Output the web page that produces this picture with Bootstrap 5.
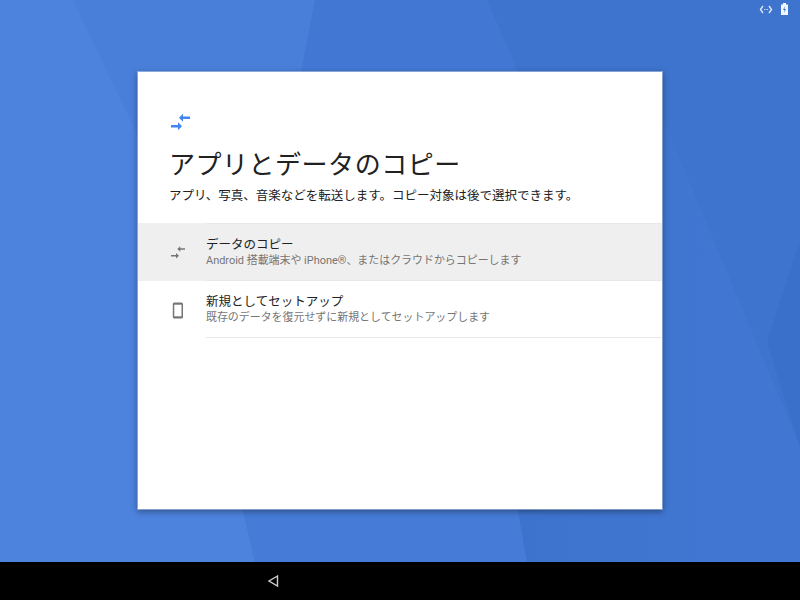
<!DOCTYPE html>
<html lang="ja"><head><meta charset="utf-8">
<link href="https://cdn.jsdelivr.net/npm/bootstrap@5.3.0/dist/css/bootstrap.min.css" rel="stylesheet">
<style>
html,body{height:100%}
body{font-family:Roboto,"Noto Sans CJK JP",sans-serif;background:#000;overflow:hidden}
.stage{height:562px;background:#3e74ce;position:relative;overflow:hidden}
.bgshape{position:absolute;inset:0;width:100%;height:100%}
.statusicons{position:absolute;top:2px;left:758px}
.sheet{width:524px;height:437px;margin-top:72px;margin-left:138px;background:#fff;box-shadow:0 0 0 1px rgba(255,255,255,.4),0 2px 6px 1px rgba(0,0,0,.35);position:relative;padding-top:38px}
.heroicon{display:block;margin-left:31px;width:24px;height:24px}
.heading{font-size:26px;line-height:34px;font-weight:400;color:#212121;margin:14px 0 0 31px;letter-spacing:.02em}
.sub{font-size:12.5px;line-height:20px;color:#212121;margin:4px 0 0 31px}
.rowitem{height:57px;display:flex}
.rowitem.active-row{height:58px;background:#efefef}
.ico{width:68px;flex:none;display:flex;align-items:center;padding-left:28px}
.rowbody{flex:1;border-bottom:1px solid #e8e8e8;padding-top:12px}
.first-rule{border-top:1px solid #e8e8e8}
.ttl{font-size:12.5px;line-height:17px;color:#212121}
.desc{font-size:10.95px;line-height:15px;color:#757575}
.list{margin-top:17px}
.navstrip{height:38px;background:#000;position:relative}
.back{position:absolute;left:267px;top:12px}
</style></head><body>
<div class="stage">
<svg class="bgshape" viewBox="0 0 800 562" preserveAspectRatio="none">
<defs>
<linearGradient id="midband" x1="0" y1="0" x2="0" y2="1"><stop offset="0" stop-color="#4278d3"/><stop offset="1" stop-color="#467cd7"/></linearGradient>
<linearGradient id="lowband" gradientUnits="userSpaceOnUse" x1="527" y1="0" x2="720" y2="0"><stop offset="0" stop-color="#3e73cd"/><stop offset="1" stop-color="#4177d2"/></linearGradient>
</defs>
<path d="M0 0H315L301 72L243 510L255 562H0Z" fill="#4d83dd"/>
<path d="M73 0H315L301 72V300H200L137 134Z" fill="#4a7fd9"/>
<path d="M315 0H487L518 72V510L527 562H255L243 510L301 72Z" fill="url(#midband)"/>
<path d="M518 72 665 124L800 447V562H527L518 510Z" fill="url(#lowband)"/>
<path d="M767 342 800 240V447Z" fill="#3b70ca"/>
</svg>
<svg class="statusicons" width="32" height="14" viewBox="0 0 32 14">
<g fill="none" stroke="#dce7f8" stroke-width="1.400"><path d="M5 4 2.500 7.500 5 11M11 4 13.500 7.500 11 11"/></g>
<path d="M6 7.500h.9M7.600 7.500h.9M9.200 7.500h.9" stroke="#dce7f8"/>
<path d="M23 2.500h2V1h3v1.500h2V13H23Z" fill="#f2f6fd"/><path d="M27 4 25 8H26.500L26 11 28 7H26.500Z" fill="#3f76d3"/>
</svg>
<div class="sheet">
<svg class="heroicon" viewBox="0 0 24 24"><path d="M10 7.700 14 3.700V6.400H21V9H14V11.700ZM13 16.300 9 12.300V15H2V17.600H9V20.300Z" fill="#4285f4"/></svg>
<h1 class="heading">アプリとデータのコピー</h1>
<p class="sub">アプリ、写真、音楽などを転送します。コピー対象は後で選択できます。</p>
<div class="list">
<div class="rowitem active-row">
<div class="ico"><svg width="20" height="20" viewBox="0 0 20 20"><path d="M11.300 7 14.300 4.200V6.300H19V7.700H14.300V9.800ZM13 13.700 10 10.900V13H5V14.400H10V16.500Z" fill="#757575"/></svg></div>
<div class="rowbody first-rule"><div class="ttl">データのコピー</div><div class="desc">Android 搭載端末や iPhone®、またはクラウドからコピーします</div></div>
</div>
<div class="rowitem">
<div class="ico"><svg width="20" height="20" viewBox="0 0 20 20"><rect x="6.800" y="2.500" width="10.200" height="16" rx="1.500" fill="#757575"/><rect x="8.300" y="4.700" width="7.200" height="11.600" fill="#fff"/></svg></div>
<div class="rowbody"><div class="ttl">新規としてセットアップ</div><div class="desc">既存のデータを復元せずに新規としてセットアップします</div></div>
</div>
</div>
</div>
</div>
<div class="navstrip"><svg class="back" width="13" height="14" viewBox="0 0 13 14"><path d="M10.500 2 2 7l8.500 5Z" fill="none" stroke="#d0d0d0" stroke-width="1.400"/></svg></div>
</body></html>
